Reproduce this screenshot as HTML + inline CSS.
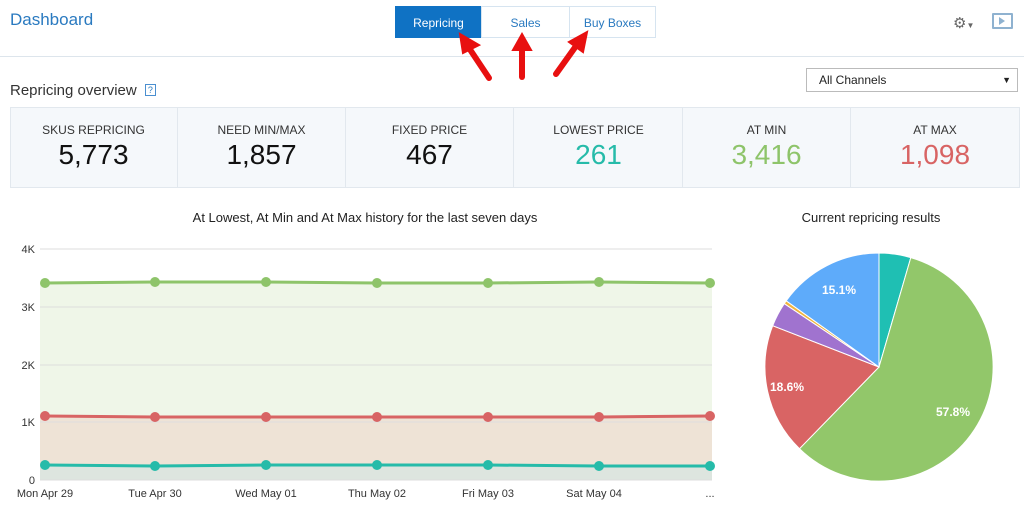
<!DOCTYPE html>
<html><head><style>
body{margin:0;width:1024px;height:514px;overflow:hidden;background:#fff;font-family:"Liberation Sans",sans-serif;position:relative}
.a{position:absolute}
.tab{position:absolute;top:6px;height:32px;line-height:32px;text-align:center;font-size:12px;border:1px solid #d6e4f0;color:#2a7ac0;box-sizing:border-box}
.cell{position:absolute;top:108px;height:80px;width:168px;border-right:1px solid #e2e8ee;text-align:center;box-sizing:border-box}
.cell .l{font-size:12px;color:#333;margin-top:15px}
.cell .v{font-size:28px;color:#111;margin-top:2px}
</style></head><body>
<div class="a" style="left:10px;top:10px;font-size:17px;color:#2a7ac0">Dashboard</div>
<div class="tab" style="left:395px;width:87px;background:#0f72c4;border-color:#0f72c4;color:#fff">Repricing</div>
<div class="tab" style="left:481px;width:89px">Sales</div>
<div class="tab" style="left:569px;width:87px">Buy Boxes</div>
<div class="a" style="left:953px;top:14px;font-size:15px;color:#666">⚙<span style="font-size:8px">▼</span></div>
<div class="a" style="left:992px;top:13px;width:17px;height:12px;border:2px solid #8fb2d0;border-radius:1px"></div>
<div class="a" style="left:999px;top:17px;width:0;height:0;border-left:6px solid #8fb2d0;border-top:4px solid transparent;border-bottom:4px solid transparent"></div>
<div class="a" style="left:0;top:56px;width:1024px;height:1px;background:#dde5ec"></div>
<div class="a" style="left:10px;top:82px;font-size:15px;color:#333">Repricing overview <span style="display:inline-block;width:9px;height:10px;border:1px solid #4a8fd0;font-size:9px;line-height:10px;text-align:center;color:#2a7ac0;margin-left:4px;vertical-align:2px">?</span></div>
<div class="a" style="left:806px;top:68px;width:212px;height:24px;border:1px solid #bbb;box-sizing:border-box;font-size:12px;line-height:22px;padding-left:12px;color:#222">All Channels<span style="position:absolute;right:6px;font-size:9px">▼</span></div>
<div class="a" style="left:10px;top:107px;width:1010px;height:81px;background:#f5f8fb;border:1px solid #e2e8ee;box-sizing:border-box"></div>
<div class="cell" style="left:10px"><div class="l">SKUS REPRICING</div><div class="v">5,773</div></div>
<div class="cell" style="left:178px"><div class="l">NEED MIN/MAX</div><div class="v">1,857</div></div>
<div class="cell" style="left:346px"><div class="l">FIXED PRICE</div><div class="v">467</div></div>
<div class="cell" style="left:515px"><div class="l">LOWEST PRICE</div><div class="v" style="color:#26bba9">261</div></div>
<div class="cell" style="left:683px"><div class="l">AT MIN</div><div class="v" style="color:#8ec46a">3,416</div></div>
<div class="cell" style="left:851px;border-right:none"><div class="l">AT MAX</div><div class="v" style="color:#d86464">1,098</div></div>
<svg class="a" style="left:0;top:0" width="1024" height="514" font-family="Liberation Sans, sans-serif">
<text x="365" y="222" font-size="13" text-anchor="middle" fill="#222">At Lowest, At Min and At Max history for the last seven days</text>
<text x="871" y="222" font-size="13" text-anchor="middle" fill="#222">Current repricing results</text>
<rect x="40" y="283" width="672" height="134" fill="#eff6e8"/>
<rect x="40" y="417" width="672" height="49" fill="#eee3d6"/>
<rect x="40" y="466" width="672" height="14" fill="#dde5df"/>
<g stroke="#ddd" stroke-width="1"><line x1="40" y1="249" x2="712" y2="249"/><line x1="40" y1="307" x2="712" y2="307"/><line x1="40" y1="365" x2="712" y2="365"/><line x1="40" y1="422" x2="712" y2="422"/><line x1="40" y1="480" x2="712" y2="480"/></g>
<g font-size="11" fill="#333" text-anchor="end"><text x="35" y="253">4K</text><text x="35" y="311">3K</text><text x="35" y="369">2K</text><text x="35" y="426">1K</text><text x="35" y="484">0</text></g>
<g font-size="11" fill="#333" text-anchor="middle"><text x="45" y="497">Mon Apr 29</text><text x="155" y="497">Tue Apr 30</text><text x="266" y="497">Wed May 01</text><text x="377" y="497">Thu May 02</text><text x="488" y="497">Fri May 03</text><text x="594" y="497">Sat May 04</text><text x="710" y="497">...</text></g>
<polyline fill="none" stroke="#8ec46a" stroke-width="3" points="45,283 155,282 266,282 377,283 488,283 599,282 710,283"/>
<polyline fill="none" stroke="#d86464" stroke-width="3" points="45,416 155,417 266,417 377,417 488,417 599,417 710,416"/>
<polyline fill="none" stroke="#26bba9" stroke-width="3" points="45,465 155,466 266,465 377,465 488,465 599,466 710,466"/>
<g fill="#8ec46a"><circle cx="45" cy="283" r="5"/><circle cx="155" cy="282" r="5"/><circle cx="266" cy="282" r="5"/><circle cx="377" cy="283" r="5"/><circle cx="488" cy="283" r="5"/><circle cx="599" cy="282" r="5"/><circle cx="710" cy="283" r="5"/></g>
<g fill="#d86464"><circle cx="45" cy="416" r="5"/><circle cx="155" cy="417" r="5"/><circle cx="266" cy="417" r="5"/><circle cx="377" cy="417" r="5"/><circle cx="488" cy="417" r="5"/><circle cx="599" cy="417" r="5"/><circle cx="710" cy="416" r="5"/></g>
<g fill="#26bba9"><circle cx="45" cy="465" r="5"/><circle cx="155" cy="466" r="5"/><circle cx="266" cy="465" r="5"/><circle cx="377" cy="465" r="5"/><circle cx="488" cy="465" r="5"/><circle cx="599" cy="466" r="5"/><circle cx="710" cy="466" r="5"/></g>
<g stroke="#fff" stroke-width="1">
<path d="M879,367 L879,253 A114,114 0 0 1 910.8,257.6 Z" fill="#1fbfb3"/>
<path d="M879,367 L910.8,257.6 A114,114 0 1 1 799.5,448.7 Z" fill="#92c76a"/>
<path d="M879,367 L799.5,448.7 A114,114 0 0 1 772.7,325.7 Z" fill="#d96464"/>
<path d="M879,367 L772.7,325.7 A114,114 0 0 1 784.3,303.6 Z" fill="#a073cf"/>
<path d="M879,367 L784.3,303.6 A114,114 0 0 1 786.2,300.8 Z" fill="#f0b43c"/>
<path d="M879,367 L786.2,300.8 A114,114 0 0 1 879,253 Z" fill="#5eabfa"/>
</g>
<g font-size="12" font-weight="bold" fill="#fff" text-anchor="middle"><text x="839" y="294">15.1%</text><text x="787" y="391">18.6%</text><text x="953" y="416">57.8%</text></g>
<g stroke="#e81010" stroke-width="6" stroke-linecap="round" fill="#e81010">
<line x1="489" y1="78" x2="469" y2="48"/><polygon points="460,34 479,45 463,53" stroke-width="2"/>
<line x1="522" y1="77" x2="522" y2="50"/><polygon points="522,34 531,50 513,50" stroke-width="2"/>
<line x1="556" y1="74" x2="576" y2="46"/><polygon points="587,32 583,52 569,42" stroke-width="2"/>
</g>
</svg>
</body></html>
